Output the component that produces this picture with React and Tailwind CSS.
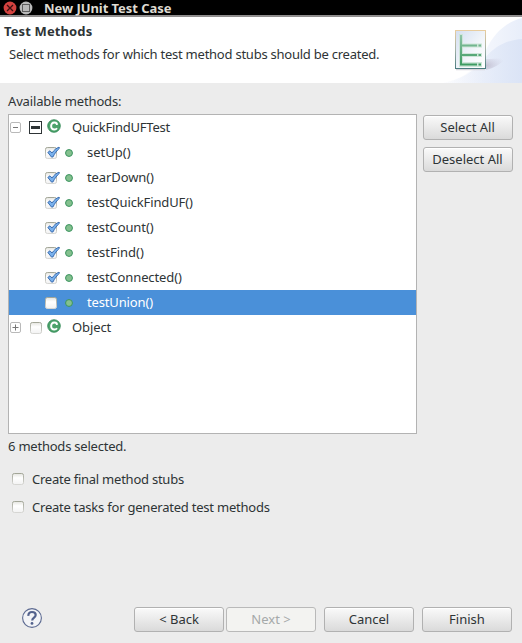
import React from "react";

const methods = [
  { name: "setUp()", checked: true, tracking: "tracking-[0px]" },
  { name: "tearDown()", checked: true, tracking: "tracking-[-0.1px]" },
  { name: "testQuickFindUF()", checked: true, tracking: "tracking-[-0.12px]" },
  { name: "testCount()", checked: true, tracking: "tracking-[-0.1px]" },
  { name: "testFind()", checked: true, tracking: "tracking-[0px]" },
  { name: "testConnected()", checked: true, tracking: "tracking-[-0.12px]" },
  { name: "testUnion()", checked: false, selected: true, tracking: "tracking-[-0.15px]" },
];

function CheckBox({ checked }) {
  return (
    <svg className="h-[14px] w-[16px] shrink-0" viewBox="0 0 16 14">
      <defs>
        <linearGradient id="boxFill" x1="0" y1="0" x2="0" y2="1">
          <stop offset="0" stopColor="#e4e4df" />
          <stop offset="0.4" stopColor="#fff" />
          <stop offset="1" stopColor="#f2f2f2" />
        </linearGradient>
        <linearGradient id="boxEdge" x1="0" y1="0" x2="0" y2="1">
          <stop offset="0" stopColor="#a3a698" />
          <stop offset="1" stopColor="#d6d6d3" />
        </linearGradient>
      </defs>
      <rect x="0.5" y="1.5" width="11" height="11" rx="1.8" fill="url(#boxFill)" stroke="url(#boxEdge)" />
      {checked && (
        <path d="M2.800 6.400L5 4.800L7 7C8.800 4.300 11.200 2.100 14 1.200L14.700 2C11.900 4.400 9.700 7.500 7.900 11L6.500 11.100Z" fill="#78b0ec" stroke="#2f62a8" strokeWidth="0.9" strokeLinejoin="round" />
      )}
    </svg>
  );
}

function Expander({ open }) {
  return (
    <svg className="h-[11px] w-[11px] shrink-0" viewBox="0 0 11 11">
      <rect x="0.5" y="0.5" width="10" height="10" rx="1.500" fill="#fff" stroke="#b9b9b9" />
      <path d={open ? "M3 5.500H8" : "M2.500 5.500H8.500M5.500 2.500V8.500"} stroke="#777" />
    </svg>
  );
}

function ClassIcon() {
  return (
    <svg className="h-[14px] w-[14px] shrink-0" viewBox="0 0 14 14">
      <circle cx="7" cy="7" r="6.300" fill="#4da36b" stroke="#2c8450" strokeWidth="0.800" />
      <path d="M9.800 5.900V4.500C9.100 3.700 8.200 3.500 7.200 3.500C5.200 3.500 4.100 5.100 4.100 7C4.100 9 5.300 10.500 7.300 10.500C8.400 10.500 9.400 10 10 9.200" fill="none" stroke="#fff" strokeWidth="1.900" />
    </svg>
  );
}

function MethodDot() {
  return (
    <svg className="h-[8px] w-[8px] shrink-0" viewBox="0 0 8 8">
      <circle cx="4" cy="4" r="3.450" fill="#84c08e" stroke="#3c9460" />
    </svg>
  );
}

function Button({ children, disabled, className = "" }) {
  return (
    <button
      className={`flex h-[25px] w-[90px] shrink-0 items-center justify-center rounded-[3px] border pb-px whitespace-nowrap ${
        disabled
          ? "border-[#b9b9b9] bg-[#f3f3f1] text-[#a5a9a9]"
          : "border-[#b1b1b1] bg-linear-to-b from-[#fafafa] to-[#dadada] text-[#2e3436] shadow-[inset_0_1px_0_#fff]"
      } ${className}`}
    >
      {children}
    </button>
  );
}

function HeaderArt() {
  return (
    <svg className="h-[66px] w-[82px] shrink-0" viewBox="0 0 82 66">
      <defs>
        <linearGradient id="glow" x1="0" y1="0" x2="1" y2="0">
          <stop offset="0" stopColor="#e2e9f8" stopOpacity="0" />
          <stop offset="1" stopColor="#dbe4f6" />
        </linearGradient>
        <linearGradient id="glowOuter" x1="0" y1="0" x2="1" y2="0">
          <stop offset="0" stopColor="#edf1fb" stopOpacity="0" />
          <stop offset="1" stopColor="#e8eefa" />
        </linearGradient>
        <linearGradient id="page" x1="0" y1="0" x2="1" y2="1">
          <stop offset="0" stopColor="#d4dff0" />
          <stop offset="0.600" stopColor="#f4f7fb" />
          <stop offset="1" stopColor="#fff" />
        </linearGradient>
        <linearGradient id="pageEdge" x1="0" y1="0" x2="0" y2="1">
          <stop offset="0" stopColor="#e8cda0" />
          <stop offset="0.500" stopColor="#a3b1a7" />
          <stop offset="1" stopColor="#4b7c80" />
        </linearGradient>
        <linearGradient id="tree" x1="0" y1="0" x2="0" y2="1">
          <stop offset="0" stopColor="#8fc4a8" />
          <stop offset="1" stopColor="#3a9a5f" />
        </linearGradient>
        <radialGradient id="shade" cx="0" cy="0.600" r="1">
          <stop offset="0" stopColor="#aaa3b8" stopOpacity="0.600" />
          <stop offset="1" stopColor="#c9c7da" stopOpacity="0" />
        </radialGradient>
      </defs>
      <path d="M0 66C20 64 38 52 46 33C54 16 66 5 82 1V66Z" fill="url(#glowOuter)" />
      <path d="M0 66C20 64 36 54 46 40C56 28 68 23 82 22V66Z" fill="url(#glow)" />
      <path d="M46 42C54 42 60 41 66 42C60 47 54 51 46 53Z" fill="url(#shade)" />
      <path d="M16 52.500H45" stroke="#d8d5dc" strokeWidth="1.500" />
      <rect x="15.500" y="13.500" width="30" height="38" fill="url(#page)" stroke="url(#pageEdge)" />
      <path d="M19 17h4v9.500h19v4H23v5.500h19v4H23v5h19v5H19Z" fill="#cde5d8" />
      <path d="M20 18H22V27.500H37V29.500H22V37H37V39H22V46.500H37V48.500H20ZM38.500 27.500H41V29.500H38.500ZM38.500 37H41V39H38.500ZM38.500 46.500H41V48.500H38.500Z" fill="url(#tree)" />
    </svg>
  );
}

export default function App() {
  return (
    <div className="flex h-[643px] w-[522px] flex-col overflow-hidden bg-[#ececec] font-['Noto_Sans','Open_Sans',sans-serif] text-[13px] leading-[18px] text-[#2e3436]">
      <div className="flex h-[17px] shrink-0 items-center border-b-2 border-[#8f8d8d] bg-black pl-[3px]">
        <svg className="h-[14px] w-[30px] shrink-0" viewBox="0 0 30 14">
          <circle cx="7" cy="7" r="6.400" fill="#d3423f" />
          <path d="M4 4L10 10M10 4L4 10" stroke="#3b1010" strokeWidth="1.300" />
          <circle cx="23" cy="7" r="6.400" fill="#b9b9b9" />
          <rect x="19.500" y="3.500" width="7" height="7" fill="#b9b9b9" stroke="#5d5d5d" />
        </svg>
        <h1 className="ml-[11px] text-[13px] font-bold leading-[18px] tracking-[-0.05px] whitespace-nowrap text-[#dfdbd2]">New JUnit Test Case</h1>
      </div>

      <header className="flex h-[66px] shrink-0 justify-between bg-white">
        <div className="pt-[5px] whitespace-nowrap">
          <h2 className="pl-1 font-bold tracking-[0.12px]">Test Methods</h2>
          <p className="mt-[5px] pl-[9px] tracking-[-0.24px]">Select methods for which test method stubs should be created.</p>
        </div>
        <HeaderArt />
      </header>

      <main className="flex shrink-0 flex-col px-2 pt-[9px]">
        <div className="h-[22px] tracking-[-0.15px]">Available methods:</div>
        <div className="flex gap-[6px]">
          <div className="h-[320px] w-[409px] shrink-0 border border-[#b3b3b3] bg-white whitespace-nowrap">
            <div className="flex h-[25px] items-center pl-px">
              <Expander open />
              <svg className="ml-2 h-[13px] w-[13px]" viewBox="0 0 13 13">
                <rect x="0.500" y="0.500" width="12" height="12" fill="#fff" stroke="#2e3436" />
                <rect x="2" y="5" width="9" height="3" fill="#2e3436" />
              </svg>
              <div className="ml-[5px] pb-[3px]"><ClassIcon /></div>
              <span className="ml-[11px] pb-[2px] tracking-[-0.25px]">QuickFindUFTest</span>
            </div>
            {methods.map((m) => (
              <div key={m.name} className={`flex h-[25px] items-center pl-[36px] ${m.selected ? "bg-[#4a90d9] text-white" : ""}`}>
                <CheckBox checked={m.checked} />
                <div className="ml-1 pt-px"><MethodDot /></div>
                <span className={`ml-[14px] pb-[2px] ${m.tracking}`}>{m.name}</span>
              </div>
            ))}
            <div className="flex h-[25px] items-center pl-px">
              <Expander />
              <div className="ml-[9px]"><CheckBox /></div>
              <div className="ml-px pb-[3px]"><ClassIcon /></div>
              <span className="ml-[11px] pb-[2px] tracking-[-0.1px]">Object</span>
            </div>
          </div>
          <div className="flex flex-col gap-[7px] pt-px">
            <Button className="pr-px">Select All</Button>
            <Button className="pr-px">Deselect All</Button>
          </div>
        </div>
        <div className="mt-[3px] h-[18px] tracking-[-0.22px]">6 methods selected.</div>
        <label className="mt-[15px] flex h-[18px] items-center pl-1">
          <CheckBox />
          <span className="ml-1 tracking-[-0.24px]">Create final method stubs</span>
        </label>
        <label className="mt-[10px] flex h-[18px] items-center pl-1">
          <CheckBox />
          <span className="ml-1 tracking-[-0.22px]">Create tasks for generated test methods</span>
        </label>
      </main>

      <footer className="mt-auto flex h-[36px] shrink-0 items-start pl-[22px]">
        <svg className="mt-px h-[20px] w-[20px] shrink-0" viewBox="0 0 20 20">
          <circle cx="10" cy="10" r="9.400" fill="#f3f4f7" stroke="#5c6a91" strokeWidth="1.100" />
          <path d="M6.400 7.800C6.200 5.300 7.700 4 10 4C12.200 4 13.700 5.100 13.700 7C13.700 9.600 10.200 9.600 10.200 12.600" fill="none" stroke="#53628d" strokeWidth="2.200" />
          <circle cx="10" cy="15.400" r="1.400" fill="#53628d" />
        </svg>
        <Button className="ml-[92px]">&lt; Back</Button>
        <Button className="ml-[2px]" disabled>Next &gt;</Button>
        <Button className="ml-2">Cancel</Button>
        <Button className="ml-2">Finish</Button>
      </footer>
    </div>
  );
}
